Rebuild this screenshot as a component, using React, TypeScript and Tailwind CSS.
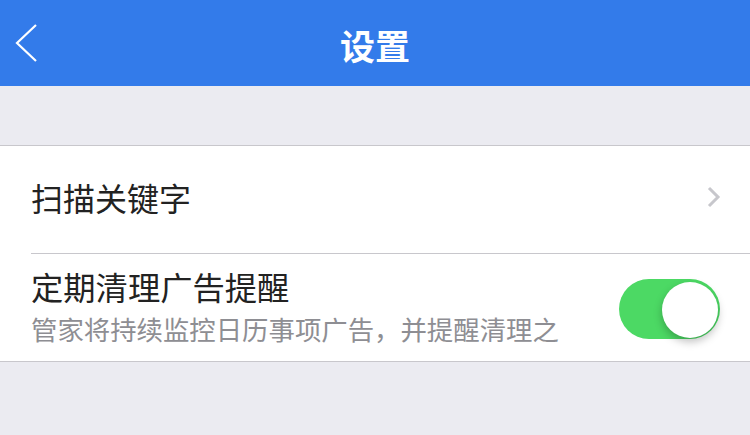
import React, { useState } from "react";

const App: React.FC = () => {
  const [enabled, setEnabled] = useState(true);

  return (
    <div
      className="w-[750px] h-[435px] bg-[#ebebf1] overflow-hidden"
      style={{ fontFamily: '"Noto Sans CJK SC", "Noto Sans", sans-serif' }}
    >
      {/* Header */}
      <div className="relative h-[86px] bg-[#337bea] flex items-center justify-center">
        <button className="absolute left-[14px] top-[24px] w-[26px] h-[40px]">
          <svg width="26" height="40" viewBox="0 0 26 40" fill="none">
            <path d="M22 1 L3 19 L22 37" stroke="#fff" strokeWidth="2.2" />
          </svg>
        </button>
        <h1 className="text-white text-[35px] font-bold leading-none mt-[2px]">设置</h1>
      </div>

      <div className="h-[59px]" />

      {/* Settings list */}
      <div className="bg-white border-y border-[#c8c7cc]">
        <div className="h-[107px] flex items-center justify-between pl-[31px] pr-[29px]">
          <span className="text-[32px] text-[#222] leading-none mt-[-6px]">扫描关键字</span>
          <svg width="14" height="22" viewBox="0 0 14 22" fill="none" className="mt-[-6px]">
            <path d="M2 2 L11 11 L2 20" stroke="#c7c7cc" strokeWidth="3" />
          </svg>
        </div>
        <div className="ml-[31px] h-px bg-[#c8c7cc]" />
        <div className="h-[107px] flex items-center justify-between pl-[31px] pr-[30px]">
          <div className="flex flex-col">
            <span className="text-[32.3px] text-[#222] leading-none mt-[-2px]">定期清理广告提醒</span>
            <span className="text-[26.4px] text-[#8e8e93] leading-none mt-[14px]">
              管家将持续监控日历事项广告，并提醒清理之
            </span>
          </div>
          <button
            onClick={() => setEnabled(!enabled)}
            className={`relative w-[101px] h-[60px] rounded-full mt-[2px] ${enabled ? "bg-[#4cd964]" : "bg-[#e5e5ea]"}`}
          >
            <span
              className={`absolute top-[3px] w-[56px] h-[56px] rounded-full bg-white shadow-[0_4px_8px_rgba(0,0,0,0.25)] ${enabled ? "right-[2px]" : "left-[2px]"}`}
            />
          </button>
        </div>
      </div>
    </div>
  );
};

export default App;
